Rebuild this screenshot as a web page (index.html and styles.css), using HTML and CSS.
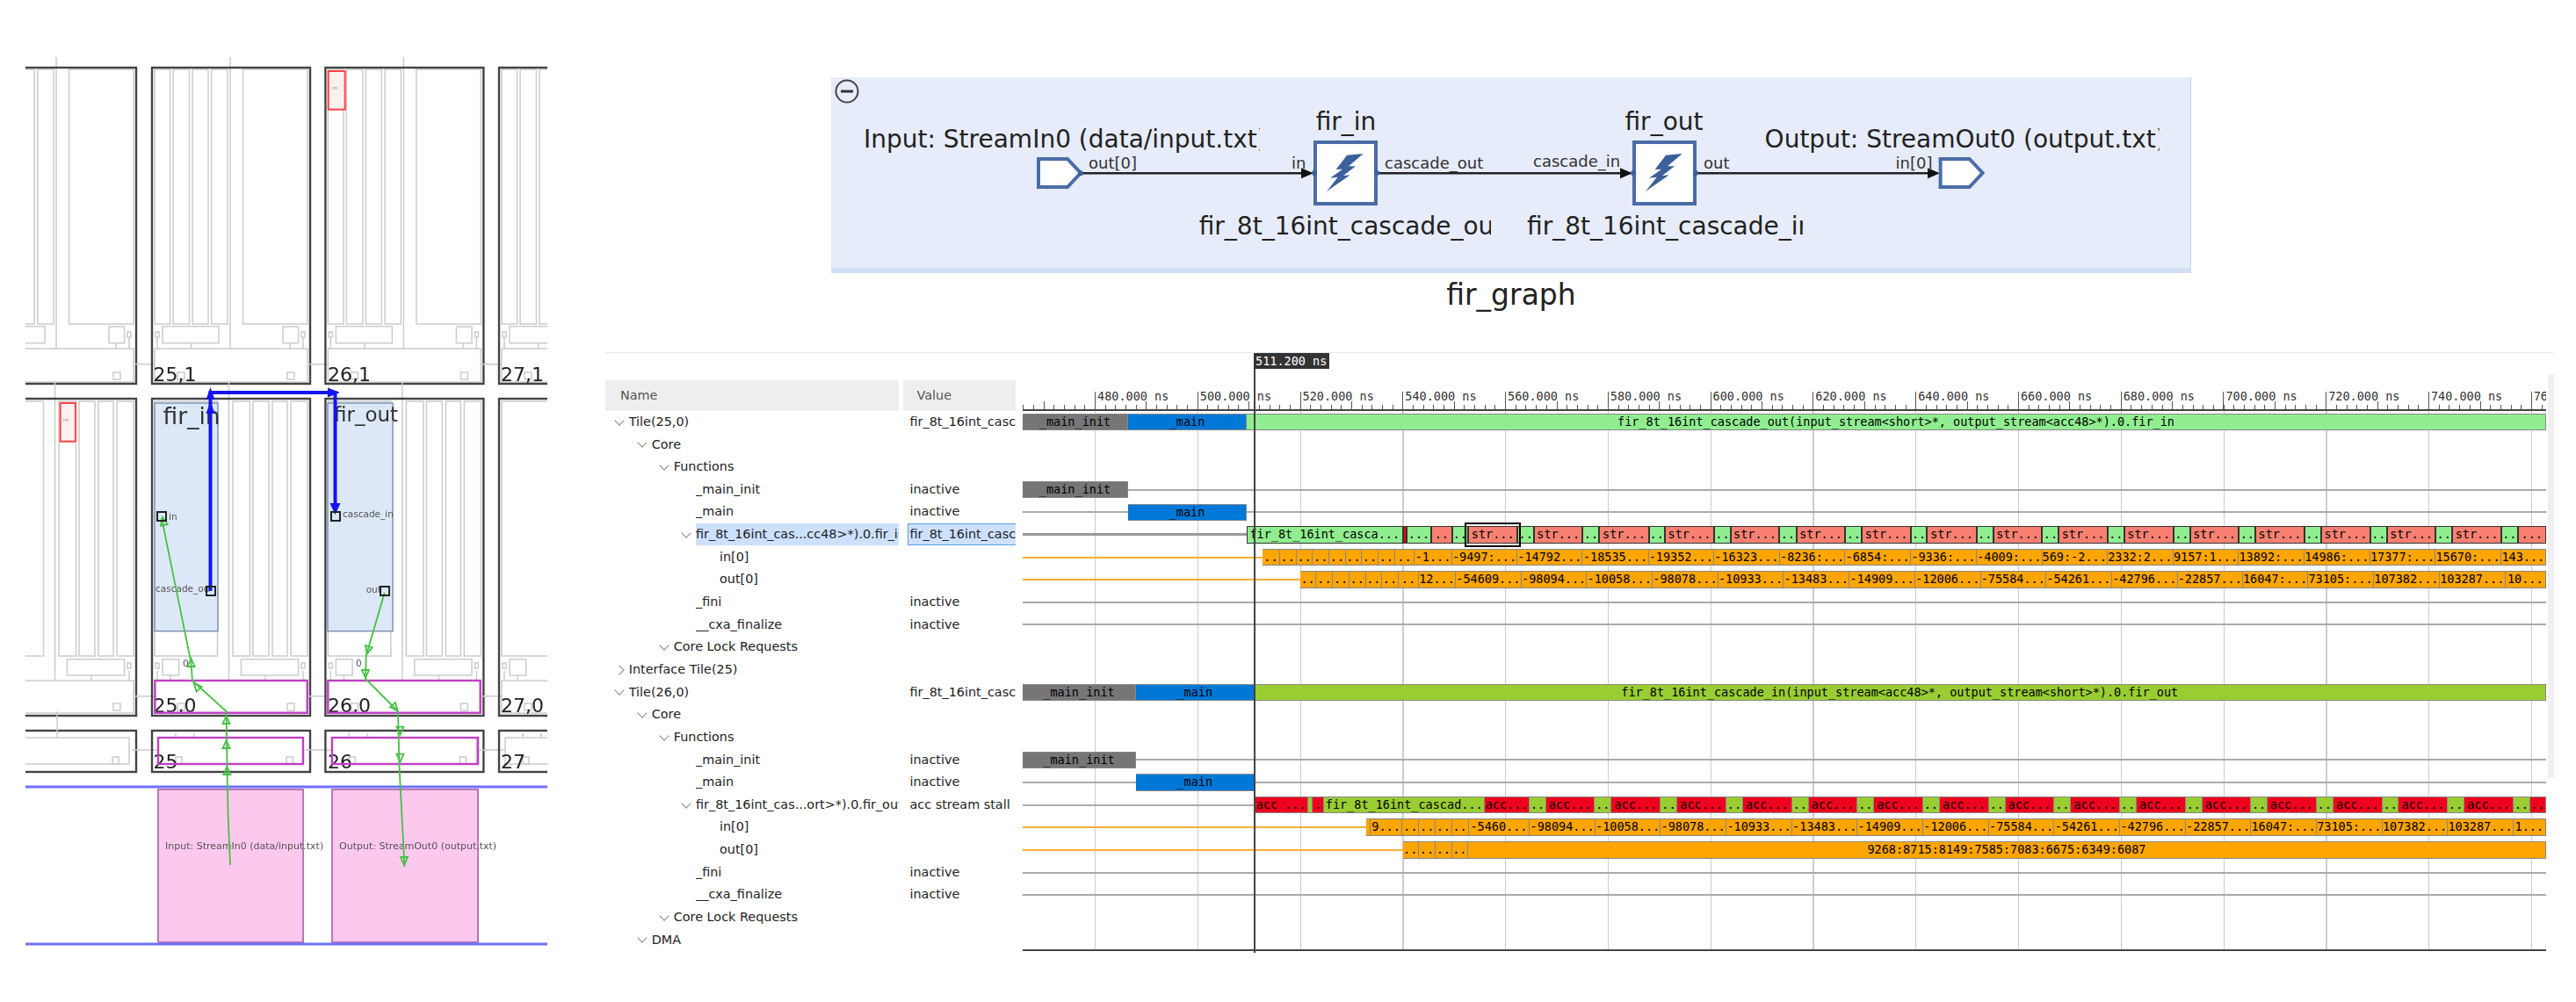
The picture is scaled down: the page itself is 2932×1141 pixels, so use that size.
FILE: index.html
```html
<!DOCTYPE html>
<html lang="en">
<head>
    <meta charset="UTF-8">
    <title>fir_graph</title>
    <link rel="stylesheet" href="styles.css">
</head>
<body>
<div class="page">

    <!-- device array view -->
    <div class="device-view">
        <svg class="device-svg" width="594" height="1040" viewBox="29 60 594 1040">
            <defs>
                <g id="tile-a">
                    <path class="part" d="M89 -12V320M44.6 313.7V320M157 313.7V320M6 307V320M172 307V320M-20 337.7H3"/>
                    <rect class="part" x="3" y="2" width="17.6" height="290"/>
                    <rect class="part" x="24" y="2" width="18.5" height="290"/>
                    <rect class="part" x="46" y="2" width="18" height="290"/>
                    <rect class="part" x="67.7" y="2" width="18.3" height="290"/>
                    <rect class="part" x="103.5" y="2" width="73.5" height="290"/>
                    <rect class="part" x="12" y="294.7" width="64" height="19"/>
                    <rect class="part" x="149" y="295" width="17.6" height="18.7"/>
                    <rect class="part" x="4" y="301" width="4" height="6"/>
                    <rect class="part" x="170" y="301" width="4" height="6"/>
                    <rect class="part" x="3" y="320" width="174" height="38"/>
                    <rect class="part" x="154" y="347" width="8" height="8"/>
                    <rect class="part" x="29" y="347" width="8" height="8"/>
                    <rect class="tile-edge" width="180" height="360"/>
                </g>
                <g id="tile-b">
                    <path class="part" d="M87.5 -19V321M21 315V321M129 315V321M6 310V321M172 310V321M-20 338.7H3"/>
                    <rect class="part" x="3" y="3" width="71.5" height="290"/>
                    <rect class="part" x="92" y="3" width="19.5" height="290"/>
                    <rect class="part" x="115" y="3" width="18" height="290"/>
                    <rect class="part" x="137" y="3" width="17" height="290"/>
                    <rect class="part" x="158" y="3" width="19" height="290"/>
                    <rect class="part" x="12" y="296.7" width="18.7" height="18.3"/>
                    <rect class="part" x="101.4" y="296.7" width="65.2" height="18.3"/>
                    <rect class="part" x="4" y="301" width="4" height="6"/>
                    <rect class="part" x="170" y="301" width="4" height="6"/>
                    <rect class="part" x="3" y="321" width="174" height="37"/>
                    <rect class="part" x="154" y="347" width="8" height="8"/>
                    <rect class="part" x="29" y="347" width="8" height="8"/>
                    <rect class="tile-edge" width="180" height="361"/>
                </g>
                <g id="shim">
                    <path class="part" d="M27 3V8M48 3V8M-23 22H7"/>
                    <rect class="part" x="7" y="8" width="165" height="30"/>
                    <rect class="part" x="153" y="30" width="7" height="8"/>
                    <rect class="part" x="27" y="30" width="7" height="8"/>
                    <rect class="tile-edge" width="180" height="47"/>
                </g>
                <path id="head" class="route-head" d="M0 -5L4 4H-4Z"/>
            </defs>

            <use href="#tile-a" x="-25" y="77"/>
            <use href="#tile-a" x="173" y="77"/>
            <use href="#tile-a" x="370.4" y="77"/>
            <use href="#tile-a" x="568" y="77"/>
            <use href="#tile-b" x="-25" y="454"/>
            <use href="#tile-b" x="173" y="454"/>
            <use href="#tile-b" x="370.4" y="454"/>
            <use href="#tile-b" x="568" y="454"/>
            <use href="#shim" x="-25" y="832"/>
            <use href="#shim" x="173" y="832"/>
            <use href="#shim" x="370.4" y="832"/>
            <use href="#shim" x="568" y="832"/>
            <path class="part" d="M65 810V840"/>

            <text class="tile-label" x="174.6" y="434">25,1</text>
            <text class="tile-label" x="373" y="434">26,1</text>
            <text class="tile-label" x="570" y="434">27,1</text>
            <text class="tile-label" x="174.6" y="811">25,0</text>
            <text class="tile-label" x="373" y="811">26,0</text>
            <text class="tile-label" x="570" y="811">27,0</text>
            <text class="tile-label" x="174.6" y="875">25</text>
            <text class="tile-label" x="373" y="875">26</text>
            <text class="tile-label" x="570" y="875">27</text>

            <!-- locks -->
            <rect class="lock" x="373.7" y="81" width="19" height="43.7"/>
            <text class="lock-text" x="378" y="102">im</text>
            <rect class="lock" x="68.6" y="459" width="17.3" height="43.7"/>
            <text class="lock-text" x="72" y="480">im</text>

            <!-- kernels -->
            <rect class="kernel" x="176" y="459" width="72" height="259.7"/>
            <rect class="kernel" x="373" y="459" width="74" height="259.7"/>
            <text class="kernel-name big" x="185.6" y="483">fir_in</text>
            <text class="kernel-name" x="380" y="480">fir_out</text>
            <text class="port-name" x="192" y="592">in</text>
            <text class="port-name" x="390" y="589">cascade_in</text>
            <text class="port-name" x="177" y="674">cascade_ou</text>
            <text class="port-name" x="416.7" y="675">out</text>
            <text class="port-name" x="208" y="759">0</text>
            <text class="port-name" x="405" y="759">0</text>

            <!-- interface blocks -->
            <rect class="iface" x="176.4" y="775" width="173.3" height="36.7"/>
            <rect class="iface" x="373.3" y="775" width="173.4" height="36.7"/>
            <rect class="iface" x="180" y="840" width="165" height="30"/>
            <rect class="iface" x="378" y="840" width="166" height="30"/>

            <!-- pl region -->
            <rect class="plio" x="180" y="899" width="165" height="174"/>
            <rect class="plio" x="378" y="899" width="166" height="174"/>
            <path class="pl-line" d="M29 896H623M29 1075H623"/>
            <text class="plio-text" x="188" y="967">Input: StreamIn0 (data/input.txt)</text>
            <text class="plio-text" x="386" y="967">Output: StreamOut0 (output.txt)</text>

            <!-- routes -->
            <path class="route" d="M262 985L259.7 930L258.8 893L257.6 810L218.9 775L217.6 755L184 590"/>
            <path class="route" d="M437.7 675L416.7 746.7L416 773L453 810L454.5 873L456.6 913L460.4 986.7"/>
            <use href="#head" transform="translate(258.4 878)"/>
            <use href="#head" transform="translate(257.6 848)"/>
            <use href="#head" transform="translate(257.6 820)"/>
            <use href="#head" transform="translate(224 781.7) rotate(-40)"/>
            <use href="#head" transform="translate(217.6 755)"/>
            <use href="#head" transform="translate(186 594) rotate(-12)"/>
            <use href="#head" transform="translate(418.8 740) rotate(195)"/>
            <use href="#head" transform="translate(416 767) rotate(180)"/>
            <use href="#head" transform="translate(449.5 805.7) rotate(140)"/>
            <use href="#head" transform="translate(455.4 831.7) rotate(180)"/>
            <use href="#head" transform="translate(455.4 862.7) rotate(180)"/>
            <use href="#head" transform="translate(460 980) rotate(180)"/>

            <path class="cascade" d="M239.5 673V447H381.5V578"/>
            <path class="cascade-head" d="M239.5 441l5 14h-10zM239.5 457l5 14h-10zM387 447l-14 -5.5v11zM381.5 586l-6 -13h12z"/>

            <rect class="port" x="179" y="583" width="10" height="10"/>
            <rect class="port" x="377" y="583" width="10" height="10"/>
            <rect class="port" x="235" y="668" width="10" height="10"/>
            <rect class="port" x="433" y="668" width="10" height="10"/>
        </svg>
    </div>

    <div class="right-side">

        <!-- graph schematic -->
        <div class="graph-panel">
            <svg width="1547" height="217" viewBox="946 88 1547 217">
                <defs>
                    <clipPath id="clip-input"><rect x="970" y="130" width="464" height="60"/></clipPath>
                    <clipPath id="clip-output"><rect x="2000" y="130" width="457.6" height="60"/></clipPath>
                    <clipPath id="clip-out-name"><rect x="1350" y="235" width="347" height="50"/></clipPath>
                    <clipPath id="clip-in-name"><rect x="1730" y="235" width="322" height="50"/></clipPath>
                    <g id="kernel-block">
                        <rect class="block" x="2" y="2" width="69" height="70"/>
                        <path class="bolt" d="M56.7 15L38 16.7L25.7 33L33 32.7L19 42.7L27.7 41.7L15 58L41.7 39.3L34 40L48 29.3L40 29.3Z"/>
                        <circle class="dot" cx="1" cy="37" r="3"/>
                        <circle class="dot" cx="72" cy="37" r="3"/>
                    </g>
                    <path id="plio-port" class="block" d="M0 0H33L48 16L33 32H0Z"/>
                </defs>

                <circle class="collapse" cx="964" cy="104" r="12.5"/>
                <rect class="collapse-bar" x="957" y="102.5" width="14" height="3"/>

                <path class="wire" d="M1232 197.3H1490M1568 197.3H1852M1930 197.3H2203"/>
                <path class="wire-head" d="M1495 197.3l-14 -6v12zM1858 197.3l-14 -6v12zM2208 197.3l-14 -6v12z"/>

                <use href="#plio-port" x="1182" y="181"/>
                <circle class="dot" cx="1230" cy="197.3" r="3"/>
                <use href="#plio-port" x="2208.6" y="181"/>
                <use href="#kernel-block" x="1495" y="160"/>
                <use href="#kernel-block" x="1858" y="160"/>

                <text class="big-label" x="983" y="168" clip-path="url(#clip-input)">Input: StreamIn0 (data/input.txt)</text>
                <text class="big-label" x="2008.6" y="168" clip-path="url(#clip-output)">Output: StreamOut0 (output.txt)</text>
                <text class="big-label mid" x="1532" y="148">fir_in</text>
                <text class="big-label mid" x="1894" y="148">fir_out</text>
                <text class="big-label" x="1364.7" y="267" clip-path="url(#clip-out-name)">fir_8t_16int_cascade_out</text>
                <text class="big-label" x="1738" y="267" clip-path="url(#clip-in-name)">fir_8t_16int_cascade_in</text>

                <text class="pin-label" x="1239" y="192">out[0]</text>
                <text class="pin-label" x="1470" y="192">in</text>
                <text class="pin-label" x="1576" y="192">cascade_out</text>
                <text class="pin-label" x="1745" y="190">cascade_in</text>
                <text class="pin-label" x="1939" y="192">out</text>
                <text class="pin-label" x="2157.5" y="192">in[0]</text>
            </svg>
        </div>
        <div class="graph-title">fir_graph</div>

        <!-- waveform window -->
        <div class="wave-window">

            <div class="tree">
                <div class="tree-head">
                    <div class="head-name">Name</div>
                    <div class="head-value">Value</div>
                </div>

                <div class="tree-row"><div class="name lv0"><i class="chev"></i><span>Tile(25,0)</span></div><div class="value">fir_8t_16int_cascade_out(input_stream&lt;short&gt;*, output_stream&lt;acc48&gt;*).0.fir_in</div></div>
                <div class="tree-row"><div class="name lv1"><i class="chev"></i><span>Core</span></div><div class="value"></div></div>
                <div class="tree-row"><div class="name lv2"><i class="chev"></i><span>Functions</span></div><div class="value"></div></div>
                <div class="tree-row"><div class="name lv3"><i class="leaf"></i><span>_main_init</span></div><div class="value">inactive</div></div>
                <div class="tree-row"><div class="name lv3"><i class="leaf"></i><span>_main</span></div><div class="value">inactive</div></div>
                <div class="tree-row"><div class="name lv3"><i class="chev"></i><span class="picked">fir_8t_16int_cas...cc48&gt;*).0.fir_in</span></div><div class="value picked-value">fir_8t_16int_cascade_out</div></div>
                <div class="tree-row"><div class="name lv4"><i class="leaf"></i><span>in[0]</span></div><div class="value"></div></div>
                <div class="tree-row"><div class="name lv4"><i class="leaf"></i><span>out[0]</span></div><div class="value"></div></div>
                <div class="tree-row"><div class="name lv3"><i class="leaf"></i><span>_fini</span></div><div class="value">inactive</div></div>
                <div class="tree-row"><div class="name lv3"><i class="leaf"></i><span>__cxa_finalize</span></div><div class="value">inactive</div></div>
                <div class="tree-row"><div class="name lv2"><i class="chev"></i><span>Core Lock Requests</span></div><div class="value"></div></div>
                <div class="tree-row"><div class="name lv0"><i class="chev closed"></i><span>Interface Tile(25)</span></div><div class="value"></div></div>

                <div class="tree-row"><div class="name lv0"><i class="chev"></i><span>Tile(26,0)</span></div><div class="value">fir_8t_16int_cascade_in(input_stream&lt;acc48&gt;*, output_stream&lt;short&gt;*).0.fir_out</div></div>
                <div class="tree-row"><div class="name lv1"><i class="chev"></i><span>Core</span></div><div class="value"></div></div>
                <div class="tree-row"><div class="name lv2"><i class="chev"></i><span>Functions</span></div><div class="value"></div></div>
                <div class="tree-row"><div class="name lv3"><i class="leaf"></i><span>_main_init</span></div><div class="value">inactive</div></div>
                <div class="tree-row"><div class="name lv3"><i class="leaf"></i><span>_main</span></div><div class="value">inactive</div></div>
                <div class="tree-row"><div class="name lv3"><i class="chev"></i><span>fir_8t_16int_cas...ort&gt;*).0.fir_out</span></div><div class="value">acc stream stall</div></div>
                <div class="tree-row"><div class="name lv4"><i class="leaf"></i><span>in[0]</span></div><div class="value"></div></div>
                <div class="tree-row"><div class="name lv4"><i class="leaf"></i><span>out[0]</span></div><div class="value"></div></div>
                <div class="tree-row"><div class="name lv3"><i class="leaf"></i><span>_fini</span></div><div class="value">inactive</div></div>
                <div class="tree-row"><div class="name lv3"><i class="leaf"></i><span>__cxa_finalize</span></div><div class="value">inactive</div></div>
                <div class="tree-row"><div class="name lv2"><i class="chev"></i><span>Core Lock Requests</span></div><div class="value"></div></div>
                <div class="tree-row"><div class="name lv1"><i class="chev"></i><span>DMA</span></div><div class="value"></div></div>
            </div>

            <div class="timeline">
                <div class="cursor"><div class="cursor-label">511.200 ns</div></div>

                <div class="ruler">
                    <div class="tick-cell first"></div>
                    <div class="tick-cell"><span>480.000 ns</span></div>
                    <div class="tick-cell"><span>500.000 ns</span></div>
                    <div class="tick-cell"><span>520.000 ns</span></div>
                    <div class="tick-cell"><span>540.000 ns</span></div>
                    <div class="tick-cell"><span>560.000 ns</span></div>
                    <div class="tick-cell"><span>580.000 ns</span></div>
                    <div class="tick-cell"><span>600.000 ns</span></div>
                    <div class="tick-cell"><span>620.000 ns</span></div>
                    <div class="tick-cell"><span>640.000 ns</span></div>
                    <div class="tick-cell"><span>660.000 ns</span></div>
                    <div class="tick-cell"><span>680.000 ns</span></div>
                    <div class="tick-cell"><span>700.000 ns</span></div>
                    <div class="tick-cell"><span>720.000 ns</span></div>
                    <div class="tick-cell"><span>740.000 ns</span></div>
                    <div class="tick-cell"><span>760.000 ns</span></div>
                </div>

                <div class="waves">
                    <!-- Tile(25,0) -->
                    <div class="wave-row">
                        <div class="seg gray" style="width:120px">_main_init</div>
                        <div class="seg blue" style="width:135px">_main</div>
                        <div class="seg lgreen" style="width:1479px">fir_8t_16int_cascade_out(input_stream&lt;short&gt;*, output_stream&lt;acc48&gt;*).0.fir_in</div>
                    </div>
                    <div class="wave-row"></div>
                    <div class="wave-row"></div>
                    <div class="wave-row">
                        <div class="seg gray" style="width:120px">_main_init</div>
                        <div class="wire" style="width:1614px"></div>
                    </div>
                    <div class="wave-row">
                        <div class="wire" style="width:120px"></div>
                        <div class="seg blue" style="width:135px">_main</div>
                        <div class="wire" style="width:1479px"></div>
                    </div>
                    <div class="wave-row picked-row">
                        <div class="wire thick" style="width:255px"></div>
                        <div class="seg lgreen" style="width:177.5px">fir_8t_16int_casca...</div>
                        <div class="seg red" style="width:4.5px"></div>
                        <div class="seg lgreen" style="width:28px">...</div>
                        <div class="seg salmon" style="width:23.7px">..</div>
                        <div class="seg lgreen" style="width:18.3px">..</div>
                        <div class="seg salmon selected" style="width:56.4px">str...</div>
                        <div class="seg lgreen" style="width:18.6px">..</div>
                        <div class="seg salmon" style="width:55.5px">str...</div>
                        <div class="seg lgreen" style="width:18.9px">..</div>
                        <div class="seg salmon" style="width:56.2px">str...</div>
                        <div class="seg lgreen" style="width:18.4px">..</div>
                        <div class="seg salmon" style="width:56px">str...</div>
                        <div class="seg lgreen" style="width:19px">..</div>
                        <div class="seg salmon" style="width:55px">str...</div>
                        <div class="seg lgreen" style="width:19.8px">..</div>
                        <div class="seg salmon" style="width:55.7px">str...</div>
                        <div class="seg lgreen" style="width:18.9px">..</div>
                        <div class="seg salmon" style="width:55.6px">str...</div>
                        <div class="seg lgreen" style="width:18.4px">..</div>
                        <div class="seg salmon" style="width:56.6px">str...</div>
                        <div class="seg lgreen" style="width:18.7px">..</div>
                        <div class="seg salmon" style="width:55.9px">str...</div>
                        <div class="seg lgreen" style="width:18.9px">..</div>
                        <div class="seg salmon" style="width:55.5px">str...</div>
                        <div class="seg lgreen" style="width:18.8px">..</div>
                        <div class="seg salmon" style="width:56.2px">str...</div>
                        <div class="seg lgreen" style="width:19px">..</div>
                        <div class="seg salmon" style="width:55.5px">str...</div>
                        <div class="seg lgreen" style="width:19px">..</div>
                        <div class="seg salmon" style="width:55.3px">str...</div>
                        <div class="seg lgreen" style="width:19.5px">..</div>
                        <div class="seg salmon" style="width:55.7px">str...</div>
                        <div class="seg lgreen" style="width:19px">..</div>
                        <div class="seg salmon" style="width:55.4px">str...</div>
                        <div class="seg lgreen" style="width:19px">..</div>
                        <div class="seg salmon" style="width:55.6px">str...</div>
                        <div class="seg lgreen" style="width:19px">..</div>
                        <div class="seg salmon" style="width:32px">...</div>
                    </div>
                    <div class="wave-row">
                        <div class="wire amber" style="width:273.3px"></div>
                        <div class="seg orange" style="width:19.4px">..</div>
                        <div class="seg orange" style="width:18.9px">..</div>
                        <div class="seg orange" style="width:18.9px">..</div>
                        <div class="seg orange" style="width:18.5px">..</div>
                        <div class="seg orange" style="width:19px">..</div>
                        <div class="seg orange" style="width:18px">..</div>
                        <div class="seg orange" style="width:19px">..</div>
                        <div class="seg orange" style="width:18.6px">..</div>
                        <div class="seg orange" style="width:22.8px">..</div>
                        <div class="seg orange" style="width:42.3px">-1...</div>
                        <div class="seg orange" style="width:74.7px">-9497:...</div>
                        <div class="seg orange" style="width:74.1px">-14792...</div>
                        <div class="seg orange" style="width:75.1px">-18535...</div>
                        <div class="seg orange" style="width:74.4px">-19352...</div>
                        <div class="seg orange" style="width:74.9px">-16323...</div>
                        <div class="seg orange" style="width:74.6px">-8236:...</div>
                        <div class="seg orange" style="width:74.5px">-6854:...</div>
                        <div class="seg orange" style="width:75px">-9336:...</div>
                        <div class="seg orange" style="width:74.6px">-4009:...</div>
                        <div class="seg orange" style="width:74.4px">569:-2...</div>
                        <div class="seg orange" style="width:74.7px">2332:2...</div>
                        <div class="seg orange" style="width:74.8px">9157:1...</div>
                        <div class="seg orange" style="width:74.3px">13892:...</div>
                        <div class="seg orange" style="width:75.2px">14986:...</div>
                        <div class="seg orange" style="width:74.4px">17377:...</div>
                        <div class="seg orange" style="width:74.6px">15670:...</div>
                        <div class="seg orange" style="width:51px">143...</div>
                    </div>
                    <div class="wave-row">
                        <div class="wire amber" style="width:315.6px"></div>
                        <div class="seg orange" style="width:18.9px">..</div>
                        <div class="seg orange" style="width:18.9px">..</div>
                        <div class="seg orange" style="width:18.4px">..</div>
                        <div class="seg orange" style="width:18.9px">..</div>
                        <div class="seg orange" style="width:18.3px">..</div>
                        <div class="seg orange" style="width:19px">..</div>
                        <div class="seg orange" style="width:23px">..</div>
                        <div class="seg orange" style="width:42px">12...</div>
                        <div class="seg orange" style="width:74.8px">-54609...</div>
                        <div class="seg orange" style="width:74.7px">-98094...</div>
                        <div class="seg orange" style="width:74.5px">-10058...</div>
                        <div class="seg orange" style="width:75px">-98078...</div>
                        <div class="seg orange" style="width:74px">-10933...</div>
                        <div class="seg orange" style="width:75.5px">-13483...</div>
                        <div class="seg orange" style="width:74.4px">-14909...</div>
                        <div class="seg orange" style="width:74.8px">-12006...</div>
                        <div class="seg orange" style="width:74.3px">-75584...</div>
                        <div class="seg orange" style="width:74.9px">-54261...</div>
                        <div class="seg orange" style="width:74.8px">-42796...</div>
                        <div class="seg orange" style="width:74.3px">-22857...</div>
                        <div class="seg orange" style="width:74.3px">16047:...</div>
                        <div class="seg orange" style="width:74.7px">73105:...</div>
                        <div class="seg orange" style="width:75px">107382...</div>
                        <div class="seg orange" style="width:74.7px">103287...</div>
                        <div class="seg orange" style="width:46.3px">10...</div>
                    </div>
                    <div class="wave-row"><div class="wire" style="width:1734px"></div></div>
                    <div class="wave-row"><div class="wire" style="width:1734px"></div></div>
                    <div class="wave-row"></div>
                    <div class="wave-row"></div>

                    <!-- Tile(26,0) -->
                    <div class="wave-row">
                        <div class="seg gray" style="width:129px">_main_init</div>
                        <div class="seg blue" style="width:134.5px">_main</div>
                        <div class="seg ygreen" style="width:1470.5px">fir_8t_16int_cascade_in(input_stream&lt;acc48&gt;*, output_stream&lt;short&gt;*).0.fir_out</div>
                    </div>
                    <div class="wave-row"></div>
                    <div class="wave-row"></div>
                    <div class="wave-row">
                        <div class="seg gray" style="width:129px">_main_init</div>
                        <div class="wire" style="width:1605px"></div>
                    </div>
                    <div class="wave-row">
                        <div class="wire" style="width:129px"></div>
                        <div class="seg blue" style="width:134.5px">_main</div>
                        <div class="wire" style="width:1470.5px"></div>
                    </div>
                    <div class="wave-row">
                        <div class="wire" style="width:264.4px"></div>
                        <div class="seg red" style="width:60.6px">acc ...</div>
                        <div class="seg ygreen" style="width:5px"></div>
                        <div class="seg red" style="width:13.5px">.</div>
                        <div class="seg ygreen" style="width:182.5px">fir_8t_16int_cascad...</div>
                        <div class="seg red" style="width:51.3px">acc...</div>
                        <div class="seg ygreen" style="width:18.7px">..</div>
                        <div class="seg red" style="width:55.4px">acc...</div>
                        <div class="seg ygreen" style="width:18.9px">..</div>
                        <div class="seg red" style="width:56.2px">acc...</div>
                        <div class="seg ygreen" style="width:19px">..</div>
                        <div class="seg red" style="width:55.5px">acc...</div>
                        <div class="seg ygreen" style="width:19px">..</div>
                        <div class="seg red" style="width:55.8px">acc...</div>
                        <div class="seg ygreen" style="width:19.2px">..</div>
                        <div class="seg red" style="width:55.4px">acc...</div>
                        <div class="seg ygreen" style="width:18.9px">..</div>
                        <div class="seg red" style="width:55.7px">acc...</div>
                        <div class="seg ygreen" style="width:18.9px">..</div>
                        <div class="seg red" style="width:56.3px">acc...</div>
                        <div class="seg ygreen" style="width:18.5px">..</div>
                        <div class="seg red" style="width:55.8px">acc...</div>
                        <div class="seg ygreen" style="width:19px">..</div>
                        <div class="seg red" style="width:55.8px">acc...</div>
                        <div class="seg ygreen" style="width:18.5px">..</div>
                        <div class="seg red" style="width:56.2px">acc...</div>
                        <div class="seg ygreen" style="width:19px">..</div>
                        <div class="seg red" style="width:55.5px">acc...</div>
                        <div class="seg ygreen" style="width:18.5px">..</div>
                        <div class="seg red" style="width:55.8px">acc...</div>
                        <div class="seg ygreen" style="width:19.2px">..</div>
                        <div class="seg red" style="width:56px">acc...</div>
                        <div class="seg ygreen" style="width:18.5px">..</div>
                        <div class="seg red" style="width:55.9px">acc...</div>
                        <div class="seg ygreen" style="width:19px">..</div>
                        <div class="seg red" style="width:55.6px">acc...</div>
                        <div class="seg ygreen" style="width:19px">..</div>
                        <div class="seg red" style="width:18px">..</div>
                    </div>
                    <div class="wave-row">
                        <div class="wire amber" style="width:390.7px"></div>
                        <div class="seg orange" style="width:5px"></div>
                        <div class="seg orange" style="width:36.8px">9...</div>
                        <div class="seg orange" style="width:18.9px">..</div>
                        <div class="seg orange" style="width:18.6px">..</div>
                        <div class="seg orange" style="width:18.7px">..</div>
                        <div class="seg orange" style="width:18.9px">..</div>
                        <div class="seg orange" style="width:69.7px">-5460...</div>
                        <div class="seg orange" style="width:74.7px">-98094...</div>
                        <div class="seg orange" style="width:74.5px">-10058...</div>
                        <div class="seg orange" style="width:74.5px">-98078...</div>
                        <div class="seg orange" style="width:75.3px">-10933...</div>
                        <div class="seg orange" style="width:74.1px">-13483...</div>
                        <div class="seg orange" style="width:74.6px">-14909...</div>
                        <div class="seg orange" style="width:75px">-12006...</div>
                        <div class="seg orange" style="width:74.5px">-75584...</div>
                        <div class="seg orange" style="width:74.8px">-54261...</div>
                        <div class="seg orange" style="width:74.7px">-42796...</div>
                        <div class="seg orange" style="width:74.5px">-22857...</div>
                        <div class="seg orange" style="width:74.3px">16047:...</div>
                        <div class="seg orange" style="width:75.2px">73105:...</div>
                        <div class="seg orange" style="width:74.4px">107382...</div>
                        <div class="seg orange" style="width:74.6px">103287...</div>
                        <div class="seg orange" style="width:37px">1...</div>
                    </div>
                    <div class="wave-row">
                        <div class="wire amber" style="width:432.5px"></div>
                        <div class="seg orange" style="width:18.5px">..</div>
                        <div class="seg orange" style="width:19px">..</div>
                        <div class="seg orange" style="width:18.7px">..</div>
                        <div class="seg orange" style="width:18.3px">..</div>
                        <div class="seg orange" style="width:1227px">9268:8715:8149:7585:7083:6675:6349:6087</div>
                    </div>
                    <div class="wave-row"><div class="wire" style="width:1734px"></div></div>
                    <div class="wave-row"><div class="wire" style="width:1734px"></div></div>
                    <div class="wave-row"></div>
                    <div class="wave-row"></div>
                </div>
            </div>

            <div class="scrollbar"><div class="scroll-thumb"></div></div>
        </div>
    </div>
</div>
</body>
</html>
```

FILE: styles.css
```css
body {
    margin: 0;
    background-color: white;
    font-family: "DejaVu Sans", sans-serif;
    color: #222;
    overflow: hidden;
}
.page {
    display: flex;
    height: 1141px;
}

/* device array view */
.device-view {
    margin: 60px 0 0 29px;
    width: 594px;
    flex: none;
}
.device-svg {
    display: block;
    filter: blur(0.6px);
}
.part {
    fill: none;
    stroke: #ccc;
    stroke-width: 1.5;
}
.tile-edge {
    fill: none;
    stroke: #444;
    stroke-width: 2.4;
}
.tile-label {
    font-size: 22px;
    fill: #222;
}
.lock {
    fill: #fff0f0;
    stroke: #f44;
    stroke-width: 2;
}
.lock-text {
    font-size: 5px;
    fill: #888;
}
.kernel {
    fill: #dce8f7;
    stroke: #7e95b5;
    stroke-width: 1.5;
}
.kernel-name {
    font-size: 23px;
    fill: #333;
}
.kernel-name.big {
    font-size: 26.5px;
}
.port-name {
    font-size: 10.5px;
    fill: #555;
}
.iface {
    fill: none;
    stroke: #c040c4;
    stroke-width: 2.4;
}
.plio {
    fill: #fdc8ee;
    stroke: #b878b8;
    stroke-width: 2;
}
.plio-text {
    font-size: 11px;
    fill: #555;
}
.pl-line {
    fill: none;
    stroke: #7070ff;
    stroke-width: 3;
}
.route {
    fill: none;
    stroke: #45c045;
    stroke-width: 1.8;
}
.route-head {
    fill: none;
    stroke: #45c045;
    stroke-width: 1.8;
}
.cascade {
    fill: none;
    stroke: #1414f0;
    stroke-width: 4;
}
.cascade-head {
    fill: #1414f0;
}
.port {
    fill: none;
    stroke: #222;
    stroke-width: 2;
}

/* schematic */
.right-side {
    margin-left: 66px;
    padding-top: 88px;
    flex: none;
    width: 2243px;
}
.graph-panel {
    margin-left: 257px;
    width: 1548px;
    height: 223px;
    box-sizing: border-box;
    background-color: #e6ecf9;
    border-right: 1px solid #c4d4ee;
    border-bottom: 6px solid #d2def4;
}
.graph-panel svg {
    display: block;
}
.graph-title {
    margin-left: 257px;
    width: 1548px;
    height: 90px;
    line-height: 50px;
    text-align: center;
    font-size: 33px;
}
.collapse {
    fill: #e6ecf9;
    stroke: #444;
    stroke-width: 2;
}
.collapse-bar {
    fill: #333;
}
.block {
    fill: white;
    stroke: #4a6ca8;
    stroke-width: 4;
}
.bolt {
    fill: #3d609c;
}
.dot {
    fill: #3d609c;
}
.wire {
    fill: none;
    stroke: #222;
    stroke-width: 2.5;
}
.wire-head {
    fill: #111;
}
.big-label {
    font-size: 28px;
    fill: #222;
}
.big-label.mid {
    text-anchor: middle;
}
.pin-label {
    font-size: 18px;
    fill: #333;
}

/* waveform window */
.wave-window {
    display: flex;
    border-top: 1px solid #e8e8e8;
    width: 2218px;
    height: 683px;
}
.tree {
    width: 475px;
    flex: none;
    padding-top: 31px;
    box-sizing: border-box;
    font-size: 14.4px;
}
.tree-head {
    display: flex;
    gap: 4.5px;
    height: 34.9px;
    line-height: 34.9px;
    color: #555;
}
.head-name {
    width: 334px;
    padding-left: 17px;
    box-sizing: border-box;
    background-color: #eee;
}
.head-value {
    width: 128.5px;
    padding-left: 16px;
    box-sizing: border-box;
    background-color: #eee;
}
.tree-row {
    display: flex;
    gap: 4.5px;
    height: 25.65px;
    line-height: 25.65px;
    white-space: nowrap;
}
.name {
    width: 334px;
    display: flex;
    align-items: center;
    box-sizing: border-box;
    overflow: hidden;
}
.name span {
    flex: 1;
    overflow: hidden;
}
.lv0 { padding-left: 9px; }
.lv1 { padding-left: 35px; }
.lv2 { padding-left: 60px; }
.lv3 { padding-left: 85.3px; }
.lv4 { padding-left: 112.3px; }
.chev, .leaf {
    display: block;
    width: 17.7px;
    flex: none;
}
.chev::before {
    content: "";
    display: block;
    width: 7px;
    height: 7px;
    margin: -4px 0 0 3px;
    border-right: 1px solid #888;
    border-bottom: 1px solid #888;
    transform: rotate(45deg);
}
.chev.closed::before {
    margin-top: 0;
    transform: rotate(-45deg);
}
.picked {
    background-color: #cce0ff;
    height: 25px;
    line-height: 25px;
}
.value {
    width: 128.5px;
    padding-left: 8px;
    box-sizing: border-box;
    overflow: hidden;
}
.value.picked-value {
    margin-left: 5px;
    width: 123.5px;
    padding-left: 2px;
    height: 25px;
    line-height: 23px;
    background-color: #cce0ff;
    border: 1px solid #5aa0e0;
    border-right: none;
}

/* timeline */
.timeline {
    position: relative;
    width: 1734px;
    flex: none;
    overflow: hidden;
}
.cursor {
    position: absolute;
    left: 263px;
    top: 0;
    bottom: 0;
    width: 2px;
    background-color: #444;
    z-index: 3;
}
.cursor-label {
    position: absolute;
    top: 0;
    left: 0;
    height: 18px;
    width: 86px;
    line-height: 18px;
    padding-left: 2px;
    box-sizing: border-box;
    background-color: #333;
    color: white;
    font-family: "DejaVu Sans Mono", monospace;
    font-size: 13.5px;
    white-space: nowrap;
}
.ruler {
    display: flex;
    align-items: flex-end;
    height: 65.9px;
    box-sizing: border-box;
    border-bottom: 2px solid #444;
    background-image:
        repeating-linear-gradient(90deg, transparent 0, transparent 23.6px, #555 23.6px, #555 24.6px, transparent 24.6px, transparent 116.78px),
        repeating-linear-gradient(90deg, transparent 0, transparent 0.25px, #555 0.25px, #555 1.25px, transparent 1.25px, transparent 11.678px);
    background-size: 100% 9px, 100% 5px;
    background-position: 0 100%, 0 100%;
    background-repeat: no-repeat;
}
.tick-cell {
    width: 116.78px;
    height: 20px;
    flex: none;
    box-sizing: border-box;
    border-left: 1px solid #555;
    padding-left: 2px;
    font-family: "DejaVu Sans Mono", monospace;
    font-size: 13.5px;
    line-height: 10px;
    white-space: nowrap;
    overflow: visible;
    color: #333;
}
.tick-cell.first {
    width: 82px;
    border-left: none;
}
.waves {
    height: 615.6px;
    box-sizing: border-box;
    border-bottom: 2px solid #444;
    background-image: repeating-linear-gradient(90deg, transparent 0, transparent 82px, #ccc 82px, #ccc 83.2px, transparent 83.2px, transparent 116.78px);
}
.wave-row {
    display: flex;
    align-items: center;
    height: 25.65px;
    overflow: hidden;
}
.picked-row {
    overflow: visible;
    position: relative;
    z-index: 1;
}
.wire {
    height: 2px;
    flex: none;
    background-color: #aaa;
}
.wire.thick {
    height: 3px;
    background-color: #999;
}
.wire.amber {
    background-color: #ffb030;
}
.seg {
    height: 19.5px;
    flex: none;
    box-sizing: border-box;
    border: 1px solid #888;
    border-left-width: 0;
    line-height: 16px;
    text-align: center;
    white-space: nowrap;
    overflow: hidden;
    font-family: "DejaVu Sans Mono", monospace;
    font-size: 13.5px;
    color: #000;
}
.picked-row .seg {
    border-color: #333;
    border-left-width: 1px;
}
.gray { background-color: #767676; }
.blue { background-color: #0078d7; }
.lgreen { background-color: #90ee90; }
.ygreen { background-color: #9acd32; }
.red { background-color: #f0001e; }
.salmon { background-color: #fa8072; }
.orange { background-color: #ffa500; }
.seg.selected {
    position: relative;
    outline: 2px solid black;
    outline-offset: 2px;
}
.scrollbar {
    width: 7px;
    margin-left: 2px;
    flex: none;
    padding-top: 24px;
    box-sizing: border-box;
}
.scroll-thumb {
    height: 460px;
    background-color: #f0f0f0;
}
```
